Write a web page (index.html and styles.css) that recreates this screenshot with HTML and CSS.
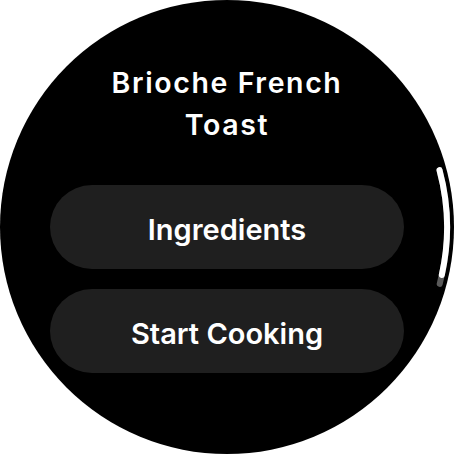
FILE: index.html
```html
<!DOCTYPE html>
<html>
<head>
<meta charset="utf-8">
<link rel="stylesheet" href="styles.css">
</head>
<body>
<div class="screen">
  <h1 class="title">Brioche French<br>Toast</h1>
  <div class="actions">
    <button class="chip">Ingredients</button>
    <button class="chip">Start Cooking</button>
  </div>
  <svg class="scroll" width="454" height="454" viewBox="0 0 454 454">
    <path d="M 439.5 170.1 A 220 220 0 0 1 439.7 283.9" fill="none" stroke="#5a5a5a" stroke-width="6" stroke-linecap="round"/>
    <path d="M 439.5 170.1 A 220 220 0 0 1 441.8 275" fill="none" stroke="#ffffff" stroke-width="6" stroke-linecap="round"/>
  </svg>
</div>
</body>
</html>
```
FILE: styles.css
```css
html, body {
  margin: 0;
  padding: 0;
  background: #ffffff;
}
.screen {
  position: relative;
  width: 454px;
  height: 454px;
  border-radius: 50%;
  background: #000000;
  overflow: hidden;
  display: flex;
  flex-direction: column;
  align-items: center;
  box-sizing: border-box;
  padding-top: 62px;
}
.title {
  margin: 0;
  font-family: "Inter", "DejaVu Sans", sans-serif;
  font-weight: 600;
  font-size: 28.5px;
  letter-spacing: 1.6px;
  line-height: 42px;
  color: #ffffff;
  text-align: center;
}
.actions {
  margin-top: 39px;
  display: flex;
  flex-direction: column;
  gap: 20px;
}
.chip {
  width: 354px;
  height: 84px;
  border: none;
  border-radius: 42px;
  background: #1f1f1f;
  color: #ffffff;
  font-family: "Inter", "DejaVu Sans", sans-serif;
  font-weight: 600;
  font-size: 29px;
  padding: 4px 0 0 0;
}
.scroll {
  position: absolute;
  left: 0;
  top: 0;
}
```
